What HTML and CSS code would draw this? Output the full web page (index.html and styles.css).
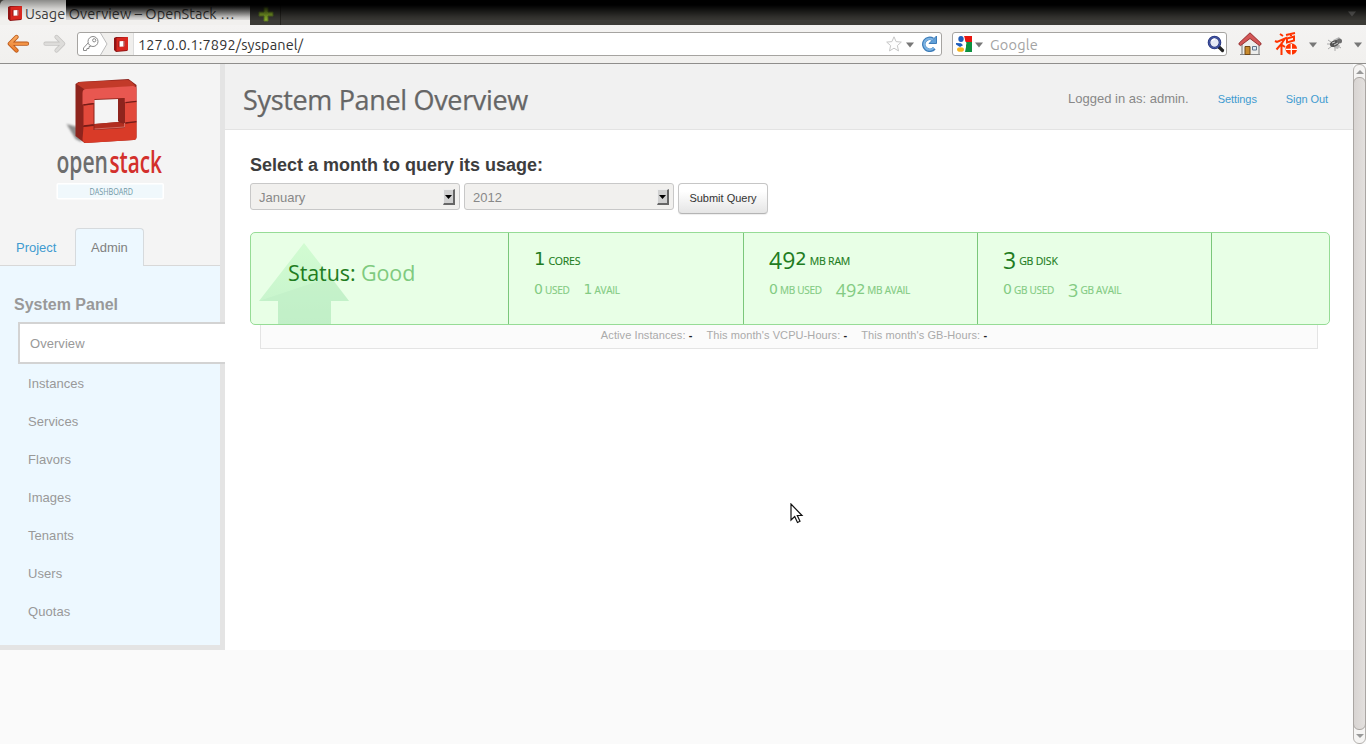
FILE: index.html
```html
<!DOCTYPE html>
<html lang="en">
<head>
<meta charset="utf-8">
<title>Usage Overview – OpenStack Dashboard</title>
<link rel="stylesheet" href="styles.css">
</head>
<body>
<svg class="defs" width="0" height="0" aria-hidden="true">
  <defs>
    <symbol id="favicon" viewBox="0 0 16 16">
      <path d="M1 2 3 1h11l1 1v12l-1 1-11 1-2-2z" fill="#8f1414"/>
      <path d="M3.500 2 15 1v13l-11.500 1z" fill="#d8271f"/>
      <path d="M6 5.200 11.500 5v5.500L6 10.800z" fill="#fff"/>
      <path d="M5.500 4.700 6.500 5v6l-1 .3zM10.500 5l1-.3V11l-1-.5z" fill="#8f1414"/>
    </symbol>
    <symbol id="caret" viewBox="0 0 8 6"><path d="M0 .5h8L4 5.500z" fill="#777"/></symbol>
    <linearGradient id="orange" x1="0" y1="0" x2="0" y2="1"><stop offset="0" stop-color="#f9a85e"/><stop offset="1" stop-color="#ea7d2c"/></linearGradient>
    <linearGradient id="stem" x1="0" y1="0" x2="0" y2="1"><stop offset="0" stop-color="#d2fcd2"/><stop offset="1" stop-color="#c5f2cb"/></linearGradient>
  </defs>
</svg>

<div class="browser">
  <div class="tabstrip">
    <div class="tab">
      <svg class="tab-icon" width="16" height="16"><use href="#favicon"/></svg>
      <span class="tab-title">Usage Overview – OpenStack …</span>
    </div>
    <div class="newtab">
      <svg width="16" height="16" viewBox="0 0 16 16"><path d="M6 1h4v5h5v4h-5v5H6v-5H1V6h5z" fill="#8fb82c" stroke="#5a7525"/></svg>
    </div>
    <div class="shade"></div>
    <svg class="tab-list" width="8" height="6"><use href="#caret"/></svg>
  </div>

  <div class="toolbar">
    <svg class="back" width="24" height="20" viewBox="0 0 24 20"><path d="M9.500 3 2.800 9.700 9.500 16.500M3.500 9.700H20" fill="none" stroke="#b95718" stroke-width="4.200" stroke-linecap="round" stroke-linejoin="round"/><path d="M9.500 3 2.800 9.700 9.500 16.500M3.500 9.700H20" fill="none" stroke="url(#orange)" stroke-width="2.600" stroke-linecap="round" stroke-linejoin="round"/></svg>
    <svg class="forward" width="24" height="20" viewBox="0 0 24 20"><path d="M13.500 3 20.200 9.700 13.500 16.500M19.500 9.700H2.500" fill="none" stroke="#c6c5c3" stroke-width="4.200" stroke-linecap="round" stroke-linejoin="round"/><path d="M13.500 3 20.200 9.700 13.500 16.500M19.500 9.700H2.500" fill="none" stroke="#dddcda" stroke-width="2.600" stroke-linecap="round" stroke-linejoin="round"/></svg>
    <div class="urlbar">
      <svg class="identity" width="56" height="22" viewBox="0 0 56 22">
        <path d="M23 0h33v22H23l6-11z" fill="#f0efed"/>
        <path d="M22.500 0 29 11l-6.500 11" fill="none" stroke="#bbb"/>
        <path d="M55.500 0v22" stroke="#ddd"/>
        <path d="M10.500 9.500 5.500 15v2.500h3l.5-2h2v-1.800l2.500-1" fill="#fff" stroke="#8a8a8a"/>
        <circle cx="15" cy="8.500" r="5" fill="#fff" stroke="#8a8a8a"/>
        <circle cx="16.200" cy="7.300" r="1.600" fill="#fff" stroke="#8a8a8a"/>
      </svg>
      <svg class="site-icon" width="16" height="16"><use href="#favicon"/></svg>
      <span class="url">127.0.0.1:7892/syspanel/</span>
      <svg class="star" width="16" height="16" viewBox="0 0 16 16"><path d="m8 .8 2.100 4.800 5.200.5-3.900 3.500 1.100 5.300L8 12.200l-4.500 2.700 1.100-5.300L.7 6.100l5.200-.5z" fill="#fdfdfd" stroke="#c6c6c6"/></svg>
      <svg class="url-caret" width="8" height="6"><use href="#caret"/></svg>
      <svg class="reload" width="16" height="16" viewBox="0 0 16 16"><path d="M13.300 12.300A6 6 0 1 1 12 3.200" fill="none" stroke="#3d7cb8" stroke-width="3.600"/><path d="M15.500 0v7.500H8z" fill="#5f9fd8" stroke="#3d7cb8"/><path d="M12.800 11.800A5.500 5.500 0 1 1 12 3.800" fill="none" stroke="#7db4e4" stroke-width="2"/></svg>
    </div>
    <div class="searchbar">
      <svg width="16" height="16" viewBox="0 0 16 16"><path d="M8 0h8v6H9z" fill="#e8150f"/><path d="M10 6h6v10H9l1-5z" fill="#0c9140"/><path d="M0 0h8l2 8-2 8H0z" fill="#fff"/><ellipse cx="5" cy="3" rx="2.700" ry="3" fill="#1e5dba"/><path d="m0 7 5 .3 2 2L4 11 0 8.500z" fill="#1e5dba"/><path d="M8 5.500c4 0 2 4 1 5z" fill="#fff"/><ellipse cx="4.500" cy="13.500" rx="3.500" ry="2.300" fill="#f8b51c"/></svg>
      <svg class="search-caret" width="8" height="6"><use href="#caret"/></svg>
      <span class="search-hint">Google</span>
      <svg class="magnifier" width="18" height="18" viewBox="0 0 18 18"><path d="m12 12 3.500 3.500" stroke="#222" stroke-width="3.200" stroke-linecap="round"/><circle cx="7.500" cy="7.500" r="5.500" fill="#e5e9f5" stroke="#1f2d78" stroke-width="2.600"/><circle cx="7.500" cy="7.500" r="5.500" fill="none" stroke="#5367b5"/><path d="M5 6q1-2 3-1.700" stroke="#fff" stroke-width="1.500" fill="none"/></svg>
    </div>
    <svg class="home" width="24" height="24" viewBox="0 0 24 24"><path d="M4 11v11.500h17V11l-8.500-8z" fill="#ededeb" stroke="#777"/><path d="M2 22.500h20" stroke="#888"/><path d="M7 14.500h5v8H7z" fill="#c88a2c" stroke="#704715"/><path d="M14.500 14.500h4v3.500h-4z" fill="#dceaf4" stroke="#5f7388"/><path d="M12 .8 22.800 11q.7 1-.3 2l-1 .6L12 6.500 2.500 13.600l-1-.6q-1-1-.3-2z" fill="#d35656" stroke="#963030" stroke-linejoin="round"/></svg>
    <svg class="fortune" width="24" height="24" viewBox="0 0 24 24"><g fill="none" stroke="#ff3300" stroke-width="2"><path d="m6 2 3 2M1 9l2 1 8-3.500-4 6-4.500 5M7.500 10.500V23M8 13l3 2"/><path d="m12 3 9-2M13 6.500l7-2v4l-7 2zM17 1v3"/><circle cx="17.300" cy="17" r="4.800" fill="#ff3300"/></g><path d="M17.300 12v11M12 17.300h11" stroke="#fff" stroke-width="1.300"/></svg>
    <svg class="fortune-caret" width="8" height="6"><use href="#caret"/></svg>
    <svg class="fly" width="18" height="15" viewBox="0 0 18 15"><path d="m5 5-3-2M6 9l-4 3M9 10v4M12 9l3 2M4 7H1" stroke="#aaa"/><path d="m7 3 6-3 2 3-4 4zM9 7l5 1-2 4-4-1z" fill="#b7b7b7"/><ellipse cx="8.500" cy="6.500" rx="4.800" ry="3" transform="rotate(-25 8.500 6.500)" fill="#555"/><circle cx="13.500" cy="4" r="2.500" fill="#6c6c6c"/><path d="m6 6 3-1M8 8l4-2" stroke="#ccc"/></svg>
    <svg class="fly-caret" width="8" height="6"><use href="#caret"/></svg>
  </div>

  <div class="viewport">
    <div class="page">
      <aside class="sidebar">
        <div class="brand">
          <svg class="logo" width="110" height="126" viewBox="0 0 110 126">
            <defs>
              <filter id="soft"><feGaussianBlur stdDeviation="1.300"/></filter>
            </defs>
            <g transform="translate(-1.500 0)">
              <path d="m11 45 15 4v14L20 60z" fill="#555" opacity=".65" filter="url(#soft)"/>
              <path d="M20 5 23 3 73 0l8 6v52q0 3-3 3l-49 3-9-7z" fill="#8e241d"/>
              <path d="m21 5 3-2 48-2q2 0 4 2l4 4-50 4z" fill="#c23a29"/>
              <path d="M27 14q0-4 4-4l46-3q4 0 4 3v12.500l-12 .8V19l-30 1v4l-12 1.500z" fill="#e85750"/>
              <path d="m28 26 10-.7v20L28 47zM69.500 23.300 81 22.500v20.200l-11.500 1z" fill="#e2493b"/>
              <path d="m28 48 10-1v4l31-2v-4.500l12-1.500v15q0 3-3 3l-47 3q-4 0-4-4z" fill="#d93b28"/>
              <path d="m39 21 24-1v23l-24 2z" fill="#f4f4f4"/>
              <path d="m62.500 20 6.500-1v25l-6.500-2z" fill="#8e241d"/>
              <path d="m39 45 23-2 7 2v3l-30 2z" fill="#b12e20"/>
              <path d="m28 26 10-1.300M70 23.600l11-1.300M28 47l10-1M70 44l11-1.300" stroke="#751c17" stroke-width="1.300"/>
              <path d="m39 50 30-2v-4" fill="none" stroke="#e58a80" stroke-width=".7"/>
            </g>
            <text class="logo-word open" x="-.5" y="94" textLength="51.500" lengthAdjust="spacingAndGlyphs">open</text>
            <text class="logo-word stack" x="52.500" y="94" textLength="52.500" lengthAdjust="spacingAndGlyphs">stack</text>
            <rect x=".2" y="104.700" width="106" height="15" rx="1" fill="#f0f8fc" stroke="#fff" stroke-width="1.500"/>
            <text class="logo-tag" x="32.500" y="115.500" textLength="43.500" lengthAdjust="spacingAndGlyphs">DASHBOARD</text>
          </svg>
        </div>
        <nav class="panels">
          <a class="panel-link">Project</a>
          <a class="panel-link active">Admin</a>
        </nav>
        <div class="menu">
          <h4>System Panel</h4>
          <a class="current">Overview</a>
          <a>Instances</a>
          <a>Services</a>
          <a>Flavors</a>
          <a>Images</a>
          <a>Tenants</a>
          <a>Users</a>
          <a>Quotas</a>
        </div>
      </aside>
      <main class="main">
        <header class="page-header">
          <h2>System Panel Overview</h2>
          <div class="user">
            <span class="who">Logged in as: admin.</span>
            <a>Settings</a>
            <a>Sign Out</a>
          </div>
        </header>
        <section class="content">
          <h3>Select a month to query its usage:</h3>
          <div class="query">
            <div class="select"><span>January</span><i><svg width="7" height="4"><path d="M0 0h7L3.500 4z"/></svg></i></div>
            <div class="select"><span>2012</span><i><svg width="7" height="4"><path d="M0 0h7L3.500 4z"/></svg></i></div>
            <button class="submit">Submit Query</button>
          </div>
          <div class="status">
            <div class="cell state">
              <svg class="arrow" width="90" height="81" viewBox="0 0 90 81"><path d="M45 0 90 58H72v23H19V58H0z" fill="url(#stem)"/><path d="M0 58 54 40l18-6 18 24H72v23H19V58z" fill="#bcecc4" opacity=".4"/></svg>
              <span class="label">Status: <em>Good</em></span>
            </div>
            <div class="cell">
              <p class="total"><b class="num">1</b><span>CORES</span></p>
              <p class="parts"><b class="num">0</b><span>USED</span><b class="num next">1</b><span>AVAIL</span></p>
            </div>
            <div class="cell">
              <p class="total"><b class="num"><b class="low">49</b>2</b><span>MB RAM</span></p>
              <p class="parts"><b class="num">0</b><span>MB USED</span><b class="num next"><b class="low">49</b>2</b><span>MB AVAIL</span></p>
            </div>
            <div class="cell">
              <p class="total"><b class="num"><b class="low">3</b></b><span>GB DISK</span></p>
              <p class="parts"><b class="num">0</b><span>GB USED</span><b class="num next"><b class="low">3</b></b><span>GB AVAIL</span></p>
            </div>
            <div class="cell last"></div>
          </div>
          <div class="activity">
            <span>Active Instances: <b>-</b></span>
            <span>This month's VCPU-Hours: <b>-</b></span>
            <span>This month's GB-Hours: <b>-</b></span>
          </div>
        </section>
      </main>
    </div>
    <div class="scrollbar">
      <svg class="up" width="8" height="4"><path d="M4 0 8 4H0z" fill="#999"/></svg>
      <div class="thumb"></div>
      <svg class="down" width="8" height="4"><path d="M0 0h8L4 4z" fill="#999"/></svg>
    </div>
  </div>
</div>
<svg class="cursor" width="14" height="21" viewBox="0 0 14 21"><path d="M1 1v16l3.700-3.500L7.500 19.500l2.500-1.200L7.300 12.500H12z" fill="#fff" stroke="#111" stroke-width="1.200"/></svg>
</body>
</html>
```
FILE: styles.css
```css
* { box-sizing: border-box; }
body { margin: 0; font-family: "Liberation Sans", Arial, sans-serif; font-size: 13px; color: #888; overflow: hidden; }
svg { display: block; flex: none; }
.defs { position: absolute; }
h2, h3, h4, p { margin: 0; }
.browser { width: 1366px; height: 744px; display: flex; flex-direction: column; }

/* Tab strip */
.tabstrip { height: 25px; flex: none; display: flex; position: relative; background: #3c3b37; font-family: Ubuntu, "Noto Sans", sans-serif; }
.tab { width: 250px; display: flex; padding: 5px 0 0 7px; gap: 2px; border-radius: 5px 5px 0 0; background: linear-gradient(#8b8b89 0, #d4d3d1 9px, #f1f0ee 18px); white-space: nowrap; }
.tab-icon { width: 16px; }
.tab-title { color: #3c3c3c; font-size: 14.500px; line-height: 18px; letter-spacing: .07px; }
.newtab { width: 31px; padding: 6px 0 0 8px; border-right: 1px solid #262521; }
.shade { position: absolute; left: 66px; right: 0; top: 0; height: 20px; background: linear-gradient(#000 0, #000 5px, rgba(0,0,0,.6) 11px, rgba(0,0,0,.2) 17px, rgba(0,0,0,.08)); }
.tab-list { position: absolute; left: 1348px; top: 11px; opacity: .4; }

/* Toolbar */
.toolbar { height: 39px; flex: none; display: flex; align-items: center; background: linear-gradient(#f4f3f2, #f1f0ee); border-bottom: 1px solid #8f8e8c; font-family: Ubuntu, "Noto Sans", sans-serif; font-size: 14.500px; }
.back { margin-left: 7px; }
.forward { margin-left: 12px; }
.urlbar, .searchbar { height: 24px; display: flex; align-items: center; background: #fff; border: 1px solid #a6a4a1; border-radius: 3px; }
.urlbar { width: 865px; margin-left: 10px; }
.site-icon { margin-left: -21px; }
.url { margin-left: 9px; color: #333; flex: 1; line-height: 20px; padding-top: 1px; letter-spacing: .12px; }
.url-caret { margin: 2px 7px 0 4px; }
.reload { margin-right: 4px; }
.searchbar { width: 275px; margin-left: 10px; padding: 0 1px 0 3px; }
.search-caret { margin: 2px 0 0 3px; }
.search-hint { flex: 1; margin-left: 7px; color: #a3a3a3; line-height: 20px; padding-top: 1px; letter-spacing: .2px; }
.home { margin-left: 11px; }
.fortune { margin-left: 12px; }
.fortune-caret { margin: 2px 0 0 11px; }
.fly { margin-left: 9px; }
.fly-caret { margin: 2px 0 0 10px; }

/* Viewport */
.viewport { flex: 1; display: flex; background: #fafafa; }
.page { width: 1353px; height: 586px; display: flex; background: #fff; }

/* Sidebar */
.sidebar { width: 225px; flex: none; background: #f4f4f4; border-right: 5px solid #e4e4e4; border-bottom: 5px solid #e4e4e4; display: flex; flex-direction: column; }
.brand { height: 164px; padding: 15px 0 0 57px; }
.logo { overflow: visible; }
.logo-word { font-family: "Open Sans", "Noto Sans", sans-serif; font-size: 30px; font-weight: 600; }
.open { fill: #6d6d6d; }
.stack { fill: #d3302c; }
.logo-tag { font-family: "Open Sans", "Noto Sans", sans-serif; font-size: 9.500px; fill: #6f97a5; }
.panels { height: 38px; flex: none; display: flex; border-bottom: 1px solid #d8d8d8; }
.panel-link { height: 38px; padding: 0 0 0 16px; line-height: 40px; color: #3f9bd0; width: 75px; }
.panel-link.active { width: 69px; padding: 0 0 0 15px; line-height: 38px; border: 1px solid #d6dadd; border-bottom: 0; border-radius: 4px 4px 0 0; background: #edf8ff; color: #808080; }
.menu { flex: 1; background: #edf8ff; padding-top: 28px; display: flex; flex-direction: column; }
.menu h4 { height: 28px; padding-left: 14px; font-size: 16px; line-height: 22px; color: #999; }
.menu a { height: 38px; flex: none; padding-left: 28px; line-height: 40px; letter-spacing: .05px; color: #999; }
.menu .current { width: 207px; height: 42px; margin-left: 18px; padding-left: 10px; background: #fff; border: 2px solid #d3d3d3; border-right: 0; position: relative; }

/* Main column */
.main { flex: 1; }
.page-header { height: 66px; display: flex; justify-content: space-between; background: #f1f1f1; border-bottom: 1px solid #e3e3e3; }
.page-header h2 { padding-left: 18px; font: 400 27px/71px "Open Sans", "Noto Sans", sans-serif; letter-spacing: -.33px; color: #666; -webkit-text-stroke: .25px #666; }
.user { display: flex; padding-right: 25px; line-height: 70px; }
.user a { margin-left: 29px; font-size: 11px; letter-spacing: -.08px; color: #3f9bd0; }
.content { padding: 24px 23px 0 25px; }
.content h3 { height: 29px; font-size: 18px; line-height: 22px; color: #3d3d3d; }
.query { height: 49px; display: flex; gap: 4px; align-items: flex-start; }
.select { width: 210px; height: 27px; padding: 0 4px 0 8px; display: flex; justify-content: space-between; align-items: center; background: #f1f0ee; border: 1px solid #c8c8c8; border-radius: 3px; }
.select span { padding-top: 2px; }
.select i { width: 12px; height: 16px; margin-top: 1px; display: grid; place-items: center; background: #d0d0d0; border: solid; border-width: 1px 2px 2px 1px; border-color: #eee #666 #666 #eee; }
.submit { width: 90px; height: 31px; padding: 0 0 2px; border: 1px solid #c6c6c6; border-bottom-color: #b4b4b4; border-radius: 4px; background: linear-gradient(#fff 25%, #e5e5e5); box-shadow: 0 1px 1px #eee; font: 11px "Liberation Sans", Arial, sans-serif; color: #333; }

/* Status summary */
.status { height: 93px; display: grid; grid-template-columns: 258px 235px 234px 234px 1fr; background: #e8ffe6; border: 1px solid #96dc96; border-radius: 5px; font-family: "Open Sans", "Noto Sans", sans-serif; color: #217c21; position: relative; }
.cell { border-right: 1px solid #7bc77b; padding: 11px 0 0 25px; white-space: nowrap; }
.state { padding: 0; position: relative; display: flex; }
.last { border: 0; }
.arrow { position: absolute; left: 8px; top: 10px; }
.label { position: relative; padding-left: 37px; font-size: 21.500px; line-height: 80px; letter-spacing: -.1px; }
.label em { font-style: normal; color: #7fca7f; }
.total, .parts { height: 30px; display: flex; align-items: baseline; line-height: 30px; }
.total { font-size: 10.500px; }
.total span { margin-left: 3px; letter-spacing: -.2px; -webkit-text-stroke: .15px; }
.parts { font-size: 10px; color: #83cb83; }
.parts span { margin-left: 2px; letter-spacing: -.25px; -webkit-text-stroke: .15px; }
.num { font-weight: 400; font-family: "DejaVu Sans", sans-serif; font-size: 18px; line-height: 30px; }
.low { font-weight: 400; font-family: "Open Sans", "Noto Sans", sans-serif; font-size: 23px; line-height: 0; vertical-align: -4px; }
.parts .num { font-size: 14px; }
.parts .low { font-size: 18px; vertical-align: -3px; }
.parts .next { margin-left: 14px; }
.activity { width: 1058px; height: 24px; margin-left: 10px; padding-left: 10px; display: flex; justify-content: center; gap: 14px; background: #fbfbfb; border: 1px solid #e4e4e4; border-top: 0; font-size: 11px; line-height: 21px; letter-spacing: .09px; color: #aaa; }
.activity b { color: #222; }

/* Scrollbar */
.scrollbar { width: 13px; display: flex; flex-direction: column; align-items: center; background: #f5f4f3; border: 1px solid #b4b1ae; border-radius: 6px; }
.up { margin: 5px 0 3px; }
.thumb { width: 13px; flex: 1; border: 1px solid #aaa6a3; border-radius: 6px; background: linear-gradient(90deg, #d8d4d2, #e3e0de); }
.down { margin: 4px 0 5px; }

.cursor { position: absolute; left: 790px; top: 503px; }
```
